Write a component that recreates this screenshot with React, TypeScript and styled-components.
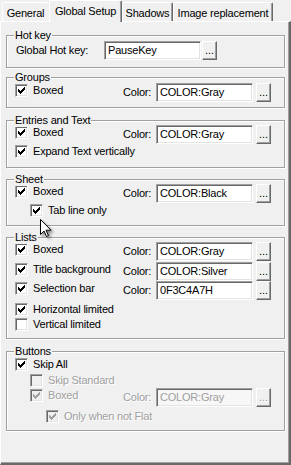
import React from 'react';
import styled, { createGlobalStyle } from 'styled-components';

const Global = createGlobalStyle`
  html, body { margin: 0; padding: 0; background: #f0f0f0; }
  body { font-family: "Liberation Sans", Arial, sans-serif; font-size: 11px; color: #000; }
  #root { width: 291px; height: 465px; }
`;

const GRAY = '#a0a0a0';
const DARK = '#696969';
const FACE = '#f0f0f0';

const Window = styled.div`
  position: relative;
  width: 291px;
  height: 465px;
  background: ${FACE};
  display: flex;
  flex-direction: column;
  overflow: hidden;
  letter-spacing: -0.2px;
`;

const TabStrip = styled.div`
  position: relative;
  z-index: 1;
  display: flex;
  align-items: flex-end;
  height: 21px;
  padding-left: 2px;
`;

const Tab = styled.div<{ $active?: boolean; $w: number; $hideRight?: boolean }>`
  box-sizing: border-box;
  width: ${p => p.$w}px;
  height: ${p => (p.$active ? 22 : 19)}px;
  margin-bottom: ${p => (p.$active ? -1 : 0)}px;
  background: ${FACE};
  border-left: 1px solid #fff;
  border-top: 1px solid #fff;
  border-right: 1px solid ${p => (p.$hideRight ? FACE : DARK)};
  box-shadow: ${p => (p.$hideRight ? 'none' : `inset -1px 0 0 ${GRAY}`)};
  border-top-left-radius: 2px;
  border-top-right-radius: 2px;
  display: flex;
  justify-content: center;
  padding-top: 4px;
  line-height: 13px;
  white-space: nowrap;
`;

const Panel = styled.div`
  flex: 1;
  box-sizing: border-box;
  border-top: 1px solid #fff;
  border-left: 1px solid #fff;
  border-right: 2px solid ${DARK};
  border-bottom: 2px solid ${DARK};
  box-shadow: inset -1px -1px 0 ${GRAY};
  padding: 13px 0 0 5px;
  display: flex;
  flex-direction: column;
`;

const Group = styled.div<{ $mt: number; $pt: number; $pb: number }>`
  position: relative;
  box-sizing: border-box;
  width: 279px;
  margin-top: ${p => p.$mt}px;
  padding: ${p => p.$pt}px 0 ${p => p.$pb}px 8px;
  border: 1px solid ${GRAY};
  box-shadow: inset 1px 1px 0 #fff, 1px 1px 0 #fff;
  display: flex;
  flex-direction: column;
`;

const Legend = styled.span`
  position: absolute;
  top: -7px;
  left: 7px;
  padding: 0 1px;
  background: ${FACE};
  line-height: 13px;
  white-space: nowrap;
`;

const Row = styled.div<{ $h: number; $mt?: number; $indent?: number }>`
  display: flex;
  align-items: center;
  height: ${p => p.$h}px;
  margin-top: ${p => p.$mt || 0}px;
  padding-left: ${p => p.$indent || 0}px;
`;

const CheckCell = styled.div<{ $w?: number; $indent?: number; $lift?: boolean }>`
  display: flex;
  align-items: center;
  box-sizing: border-box;
  width: ${p => (p.$w ? `${p.$w}px` : 'auto')};
  padding-left: ${p => p.$indent || 0}px;
  margin-bottom: ${p => (p.$lift ? 4 : 0)}px;
  flex: none;
`;

const Label = styled.span<{ $disabled?: boolean }>`
  line-height: 13px;
  white-space: nowrap;
  color: ${p => (p.$disabled ? GRAY : '#000')};
  text-shadow: ${p => (p.$disabled ? '1px 1px 0 #fff' : 'none')};
`;

const CheckText = styled(Label)`
  margin-left: 5px;
`;

const FieldLabel = styled(Label)<{ $w: number; $pl?: number }>`
  box-sizing: border-box;
  width: ${p => p.$w}px;
  padding-left: ${p => p.$pl || 0}px;
  flex: none;
`;

const Box = styled.span<{ $disabled?: boolean }>`
  box-sizing: border-box;
  display: block;
  width: 13px;
  height: 13px;
  flex: none;
  border-top: 1px solid ${GRAY};
  border-left: 1px solid ${GRAY};
  border-right: 1px solid #fff;
  border-bottom: 1px solid #fff;
  box-shadow: inset 1px 1px 0 ${DARK}, inset -1px -1px 0 #e3e3e3;
  background: ${p => (p.$disabled ? FACE : '#fff')};
  & > svg { display: block; }
`;

const Edit = styled.div<{ $disabled?: boolean }>`
  box-sizing: border-box;
  width: 97px;
  height: 19px;
  flex: none;
  border-top: 1px solid ${GRAY};
  border-left: 1px solid ${GRAY};
  border-right: 1px solid #fff;
  border-bottom: 1px solid #fff;
  box-shadow: inset 1px 1px 0 ${DARK}, inset -1px -1px 0 #e3e3e3;
  background: ${p => (p.$disabled ? '#f7f7f7' : '#fff')};
  color: ${p => (p.$disabled ? GRAY : '#000')};
  padding-left: 3px;
  line-height: 17px;
  white-space: nowrap;
  overflow: hidden;
`;

const DotsButton = styled.div<{ $disabled?: boolean; $ml: number }>`
  box-sizing: border-box;
  width: 15px;
  height: 19px;
  flex: none;
  margin-left: ${p => p.$ml}px;
  border-top: 1px solid #fff;
  border-left: 1px solid #fff;
  border-right: 1px solid ${DARK};
  border-bottom: 1px solid ${DARK};
  box-shadow: inset -1px -1px 0 ${GRAY};
  background: ${FACE};
  color: ${p => (p.$disabled ? GRAY : '#000')};
  text-shadow: ${p => (p.$disabled ? '1px 1px 0 #fff' : 'none')};
  text-align: center;
  line-height: 17px;
  letter-spacing: 0;
`;

const Cursor = styled.svg`
  position: absolute;
  left: 40px;
  top: 219px;
  z-index: 5;
  filter: drop-shadow(2px 2px 1.5px rgba(0, 0, 0, 0.45));
`;

const CHECK: [number, number][] = [
  [2, 4], [3, 5], [4, 6], [5, 5], [6, 4], [7, 3], [8, 2],
];

function Check({ checked, disabled }: { checked?: boolean; disabled?: boolean }) {
  return (
    <Box $disabled={disabled}>
      {checked && (
        <svg width="11" height="11" viewBox="0 0 11 11" shapeRendering="crispEdges">
          {CHECK.map(([x, y]) => (
            <rect key={x} x={x} y={y} width="1" height="3" fill={disabled ? GRAY : '#000'} />
          ))}
        </svg>
      )}
    </Box>
  );
}

function CheckRow({ label, checked, disabled, indent, mt }: {
  label: string; checked?: boolean; disabled?: boolean; indent?: number; mt?: number;
}) {
  return (
    <Row $h={15} $mt={mt} $indent={indent}>
      <Check checked={checked} disabled={disabled} />
      <CheckText $disabled={disabled}>{label}</CheckText>
    </Row>
  );
}

function ColorRow({ label, value, checked = true, disabled, indent, mt }: {
  label: string; value: string; checked?: boolean; disabled?: boolean; indent?: number; mt?: number;
}) {
  return (
    <Row $h={19} $mt={mt}>
      <CheckCell $w={108} $indent={indent} $lift>
        <Check checked={checked} disabled={disabled} />
        <CheckText $disabled={disabled}>{label}</CheckText>
      </CheckCell>
      <FieldLabel $w={33} $disabled={disabled}>Color:</FieldLabel>
      <Edit $disabled={disabled}>{value}</Edit>
      <DotsButton $ml={3} $disabled={disabled}>...</DotsButton>
    </Row>
  );
}

export default function App() {
  return (
    <>
      <Global />
      <Window>
        <TabStrip>
          <Tab $w={47} $hideRight>General</Tab>
          <Tab $w={73} $active>Global Setup</Tab>
          <Tab $w={51}>Shadows</Tab>
          <Tab $w={100}>Image replacement</Tab>
        </TabStrip>
        <Panel>
          <Group $mt={0} $pt={5} $pb={7}>
            <Legend>Hot key</Legend>
            <Row $h={19}>
              <FieldLabel $w={89} $pl={1}>Global Hot key:</FieldLabel>
              <Edit>PauseKey</Edit>
              <DotsButton $ml={1}>...</DotsButton>
            </Row>
          </Group>

          <Group $mt={9} $pt={5} $pb={5}>
            <Legend>Groups</Legend>
            <ColorRow label="Boxed" value="COLOR:Gray" />
          </Group>

          <Group $mt={12} $pt={4} $pb={8}>
            <Legend>Entries and Text</Legend>
            <ColorRow label="Boxed" value="COLOR:Gray" />
            <CheckRow label="Expand Text vertically" checked />
          </Group>

          <Group $mt={11} $pt={4} $pb={7}>
            <Legend>Sheet</Legend>
            <ColorRow label="Boxed" value="COLOR:Black" />
            <CheckRow label="Tab line only" checked indent={15} />
          </Group>

          <Group $mt={11} $pt={4} $pb={6}>
            <Legend>Lists</Legend>
            <ColorRow label="Boxed" value="COLOR:Gray" />
            <ColorRow label="Title background" value="COLOR:Silver" mt={1} />
            <ColorRow label="Selection bar" value="0F3C4A7H" />
            <CheckRow label="Horizontal limited" checked mt={2} />
            <CheckRow label="Vertical limited" />
          </Group>

          <Group $mt={12} $pt={5} $pb={6}>
            <Legend>Buttons</Legend>
            <CheckRow label="Skip All" checked />
            <CheckRow label="Skip Standard" disabled indent={15} mt={1} />
            <ColorRow label="Boxed" value="COLOR:Gray" disabled indent={15} />
            <CheckRow label="Only when not Flat" checked disabled indent={31} mt={2} />
          </Group>
        </Panel>
        <Cursor width="14" height="20" viewBox="0 0 14 20">
          <path
            d="M0.5 0.5 L0.5 15.5 L4 12 L6.5 17.5 L8.5 16.6 L6 11.2 L11 11.2 Z"
            fill="#fff"
            stroke="#000"
            strokeWidth="1"
            strokeLinejoin="miter"
          />
        </Cursor>
      </Window>
    </>
  );
}
